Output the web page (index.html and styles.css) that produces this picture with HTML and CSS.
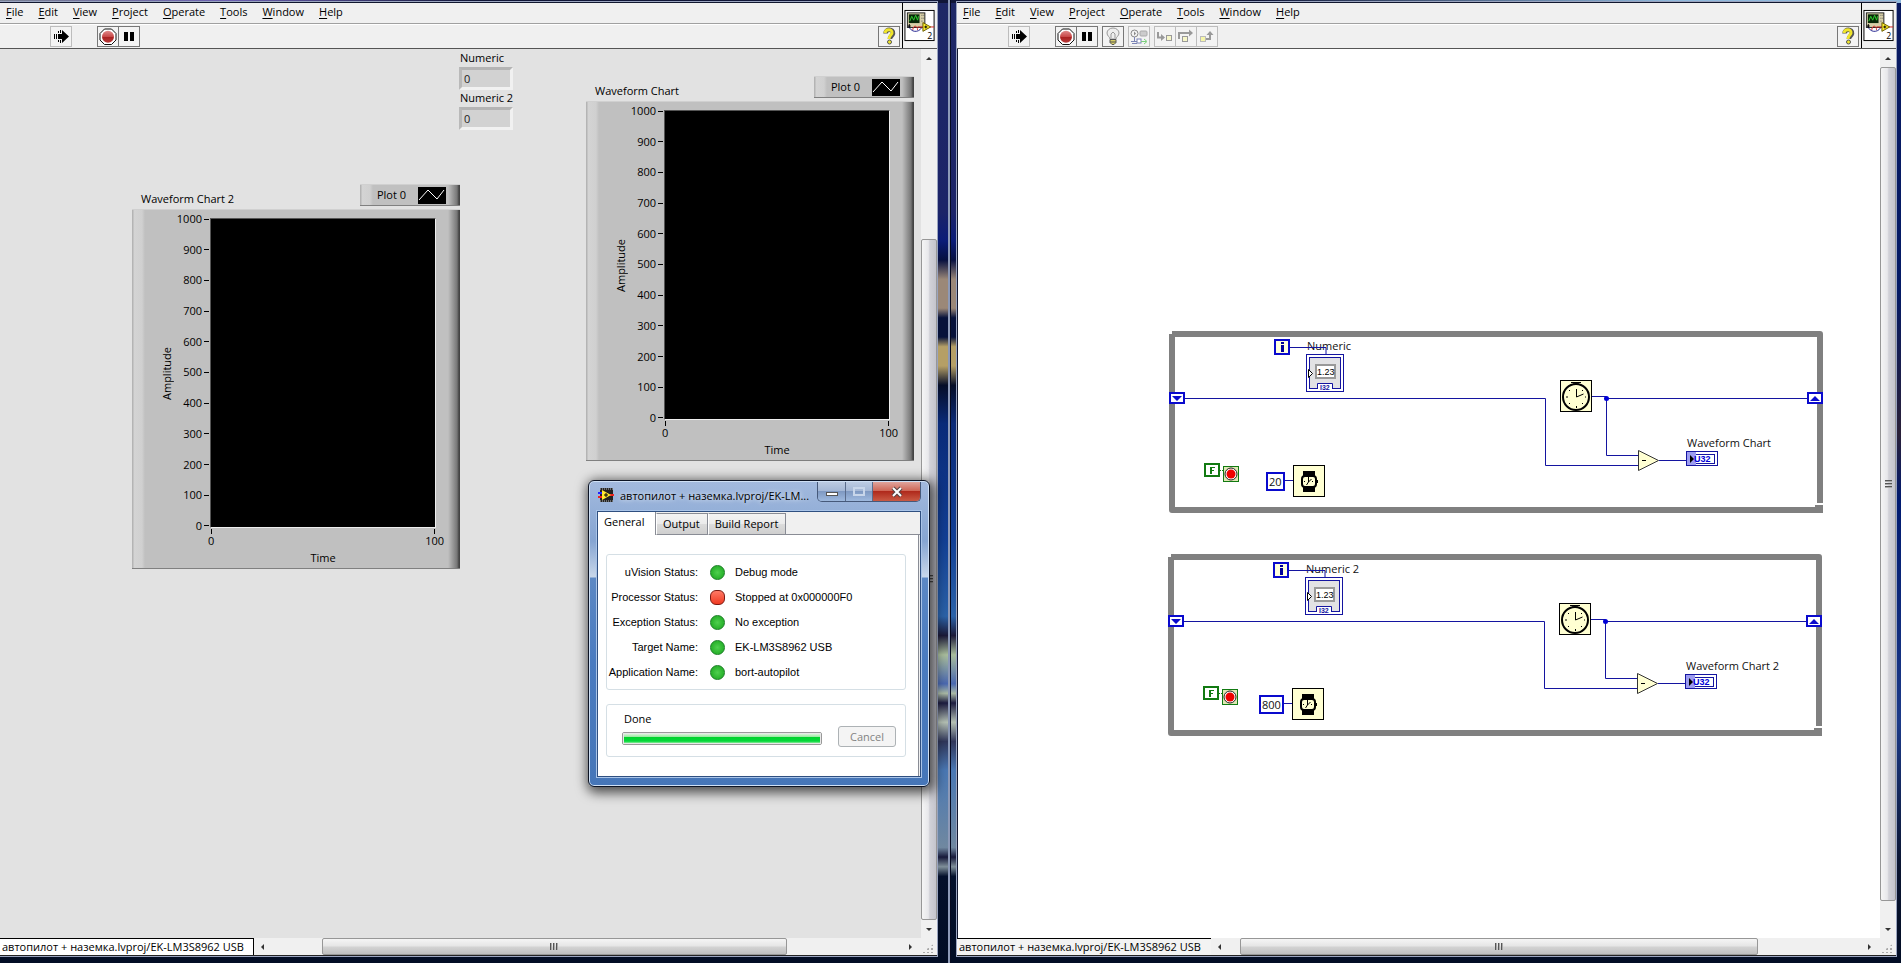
FILE: index.html
```html
<!DOCTYPE html>
<html lang="en">
<head>
<meta charset="utf-8">
<title>LabVIEW</title>
<link rel="stylesheet" href="styles.css">
</head>
<body>
<svg class="defs" aria-hidden="true">
  <defs>
    <linearGradient id="stopFill" x1="0" y1="0" x2="0" y2="1">
      <stop offset="0" stop-color="#e08a8a"/><stop offset=".5" stop-color="#c84848"/><stop offset=".52" stop-color="#a82020"/><stop offset="1" stop-color="#b83a3a"/>
    </linearGradient>
    <symbol id="run" viewBox="0 0 20 19">
      <path d="M8 7h3V3l7 6.500-7 6.500v-4H8z" fill="#000"/>
      <path d="M3.500 7v5M5.500 7v5M7.500 4v2M9.500 3v3M7.500 7v5M7.500 13v2M9.500 13v3" stroke="#000"/>
    </symbol>
    <symbol id="abort" viewBox="0 0 20 19">
      <path d="M6.500 2h7l4.500 4.500v6.500L13.500 17.500h-7L2 13V6.500z" fill="#fff" stroke="#111"/>
      <circle cx="10" cy="9.700" r="6" fill="url(#stopFill)"/>
    </symbol>
    <symbol id="pause" viewBox="0 0 20 19"><path d="M5 5h4v9H5zM11 5h4v9h-4z"/></symbol>
    <symbol id="bulb" viewBox="0 0 20 19">
      <path d="M7 12c0-2-3-3-3-6a6 5 0 0 1 12 0c0 3-3 4-3 6z" fill="#eee" stroke="#999"/>
      <path d="M8 11V7l2-2 2 2v4" fill="none" stroke="#999"/>
      <path d="M7 12.500h6v3l-2 2H9l-2-2z" fill="#d8cf66" stroke="#555"/>
      <path d="M7 15h6" stroke="#555"/>
    </symbol>
    <symbol id="retain" viewBox="0 0 20 19">
      <circle cx="5.500" cy="6.500" r="3.500" fill="none" stroke="#888"/><path d="M5 4.500l2 2-2 2z" fill="#888"/>
      <rect x="11" y="4" width="7" height="5" rx="1" fill="#ccc" stroke="#aaa"/>
      <path d="M5.500 10v4M2 14.500h6M3 16.500h5" stroke="#7b84b5"/>
      <rect x="8" y="12" width="4" height="4" fill="#fff" stroke="#7b84b5"/>
      <path d="M12 14.500h5M15 12l3 2.500-3 2.500" fill="none" stroke="#7ccf7c"/>
    </symbol>
    <symbol id="stepin" viewBox="0 0 20 19">
      <path d="M3 5v5.500h4" fill="none" stroke="#999" stroke-width="2"/><path d="M6 7l4 3.500-4 3.500z" fill="#999"/>
      <rect x="11.500" y="8.500" width="5" height="5" fill="#f6f6c8" stroke="#999"/>
    </symbol>
    <symbol id="stepover" viewBox="0 0 20 19">
      <path d="M3 12V6h11" fill="none" stroke="#999" stroke-width="2"/><path d="M13 2.500l4 3.500-4 3.500z" fill="#999"/>
      <rect x="6.500" y="9.500" width="5" height="5" fill="#f6f6c8" stroke="#999"/>
    </symbol>
    <symbol id="stepout" viewBox="0 0 20 19">
      <path d="M9 12h4V7" fill="none" stroke="#999" stroke-width="2"/><path d="M9.500 8L13 4l3.500 4z" fill="#999"/>
      <rect x="3.500" y="9.500" width="5" height="5" fill="#f6f6a8" stroke="#bbb"/>
    </symbol>
    <symbol id="help" viewBox="0 0 20 19">
      <path d="M6.500 6.500C6.500 1.500 14.500 1.500 14 6.500 13.500 9 11 9 11 12" fill="none" stroke="#555" stroke-width="4.500"/>
      <path d="M6 6C6.500 1.500 13.500 1.500 13 6 12.500 8.500 10 8.500 10 12" fill="none" stroke="#f0e52a" stroke-width="3"/>
      <circle cx="10.500" cy="15" r="2" fill="#f0e52a" stroke="#555"/>
    </symbol>
    <symbol id="vi" viewBox="0 0 35 45">
      <rect x="2" y="7" width="30" height="31" fill="#fff" stroke="#000"/>
      <rect x="4.500" y="9.500" width="18" height="15" fill="#d8d0a8" stroke="#222"/>
      <rect x="6" y="11" width="11" height="9" fill="#082808"/>
      <path d="M7 18l2-5 2 4 2-5 2 5 1-4" fill="none" stroke="#2fd02f"/>
      <path d="M19 12h1M21 12h1M19 15h1M21 15h1M19 18h1" stroke="#555"/>
      <path d="M6 23c2 7 10 7 13 2" fill="none" stroke="#23238f"/>
      <path d="M10 27c1-6 5-4 5 0M15 24h6M26 24h6" fill="none" stroke="#d42020"/>
      <path d="M5 23h3M6.500 21v4" stroke="#000"/>
      <path d="M20.500 19.500l8 4.500-8 4.500z" fill="#ffef2a" stroke="#6b5c00"/>
      <path d="M22 24h3M23.500 22.500v3" stroke="#000"/>
      <text x="25" y="36" class="vi-num">2</text>
    </symbol>
    <symbol id="structure" viewBox="0 0 654 182">
      <path d="M3 3H651V172" fill="none" stroke="#808080" stroke-width="6" stroke-linejoin="round"/>
      <path d="M3 3V179H651" fill="none" stroke="#808080" stroke-width="6" stroke-linejoin="round"/>
      <path d="M646 174h8v8h-8z" fill="#808080"/>
      <path d="M16 67.500H376.500V134.500H469M423 65.500h14v2H638M437.500 67V124.500H469M490 129.500h27M121 16.500h36v8" fill="none" stroke="#1414a0"/>
      <circle cx="437.500" cy="67.500" r="2.500" fill="#0000d8"/>
      <g fill="#fff" stroke="#0a0acd" stroke-width="2">
        <rect x="1" y="62" width="14" height="10"/><rect x="639" y="62" width="14" height="10"/>
        <rect x="106" y="9" width="14" height="14" fill="#ffffdc"/>
      </g>
      <path d="M3 65h10l-5 5zM641 70h10l-5-5z" fill="#0a0acd"/>
      <path d="M112 11h3v2h-3zM112 14h3v7h-3z" fill="#00009b"/>
      <rect x="137.500" y="23.500" width="37" height="37" fill="#fff" stroke="#1414a0"/>
      <rect x="140.500" y="26.500" width="31" height="31" fill="#e2e2e4" stroke="#1414a0"/>
      <rect x="147" y="34" width="19" height="13" fill="#fff" stroke="#999" stroke-width="2"/>
      <text x="148" y="44" class="glyph">1.23</text>
      <path d="M139.500 38.500l4 4-4 4z" fill="#fff" stroke="#000"/>
      <path d="M148.500 58v-5.500h15V58" fill="#fff" stroke="#1414a0"/>
      <text x="151" y="59" class="glyph-blue">I32</text>
      <rect x="391.500" y="49.500" width="31" height="31" fill="#ffffd2" stroke="#000"/>
      <circle cx="407" cy="66" r="13" fill="none" stroke="#000" stroke-width="2"/>
      <path d="M402 51.500h10M404 53h6M407.500 58v8l7-3M407.500 75v2M397 66h2M416 66h1M400 59l1 1M414 59l-1 1M400 73l1-1M414 73l-1-1" fill="none" stroke="#000"/>
      <path d="M469.500 119.500l20 10-20 10z" fill="#ffffd2" stroke="#333"/><path d="M473 129.500h4" stroke="#000"/>
      <rect x="517.500" y="120.500" width="31" height="14" fill="#fff" stroke="#1414a0"/>
      <rect x="520.500" y="123.500" width="25" height="9" fill="#fff" stroke="#1414a0"/>
      <path d="M518 121h9v13h-9z" fill="#9c9cf0"/><path d="M521 124l4 4-4 4z"/>
      <text x="525" y="131" class="glyph-u32">U32</text>
      <rect x="36" y="133" width="14" height="12" fill="#fff" stroke="#127a12" stroke-width="2"/>
      <path d="M41 136h5v1h-3v2h2v1h-2v3h-2z" fill="#127a12"/>
      <rect x="54.500" y="135.500" width="15" height="15" fill="#dfe9b4" stroke="#127a12"/>
      <circle cx="62" cy="143" r="6" fill="#fff" stroke="#222"/><circle cx="62" cy="143" r="4.500" fill="#f00000"/>
      <path d="M51 139.500h3" stroke="#127a12" stroke-dasharray="1 1"/>
      <rect x="124.500" y="134.500" width="31" height="31" fill="#ffffd2" stroke="#000"/>
      <path d="M134 140h12v6h-12zM134 156h12v5h-12z"/>
      <rect x="133" y="145" width="14" height="11" rx="3" fill="#ffffd2" stroke="#000" stroke-width="2"/>
      <path d="M139.500 146v5l3-3M139.500 151l-2 3M135 150.500h1M143 150.500h1" fill="none" stroke="#000"/>
      <path d="M148 149h1v3h-1z"/>
      <path d="M115 149.500h9" stroke="#1414a0"/>
    </symbol>
  </defs>
</svg>

<main class="desktop">
  <section class="window window-left" aria-label="Front panel">
    <div class="client">
      <header class="head">
        <div class="bars">
          <nav class="menu">
            <button><u>F</u>ile</button><button><u>E</u>dit</button><button><u>V</u>iew</button><button><u>P</u>roject</button><button><u>O</u>perate</button><button><u>T</u>ools</button><button><u>W</u>indow</button><button><u>H</u>elp</button>
          </nav>
          <div class="toolbar">
            <button class="tool dim run" aria-label="Run"><svg><use href="#run"/></svg></button>
            <div class="group"><button class="tool" aria-label="Abort"><svg><use href="#abort"/></svg></button><button class="tool" aria-label="Pause"><svg><use href="#pause"/></svg></button></div>
            <button class="tool help" aria-label="Context help"><svg><use href="#help"/></svg></button>
          </div>
        </div>
        <svg class="vi-icon"><use href="#vi"/></svg>
      </header>
      <div class="work">
        <div class="panel">
          <div class="numeric numeric-1"><label for="n1">Numeric</label><input id="n1" value="0" readonly></div>
          <div class="numeric numeric-2"><label for="n2">Numeric 2</label><input id="n2" value="0" readonly></div>

          <figure class="waveform waveform-1">
            <div class="top"><figcaption>Waveform Chart</figcaption>
              <div class="legend">Plot 0<svg viewBox="0 0 28 17"><path d="M1 13L10 3l9 9 7-9" fill="none" stroke="#fff"/></svg></div></div>
            <div class="chart">
              <span class="ylabel">Amplitude</span>
              <ul class="yticks"><li>1000</li><li>900</li><li>800</li><li>700</li><li>600</li><li>500</li><li>400</li><li>300</li><li>200</li><li>100</li><li>0</li></ul>
              <div class="plot"></div>
              <div class="xticks"><span>0</span><span>100</span></div>
              <span class="xlabel">Time</span>
            </div>
          </figure>

          <figure class="waveform waveform-2">
            <div class="top"><figcaption>Waveform Chart 2</figcaption>
              <div class="legend">Plot 0<svg viewBox="0 0 28 17"><path d="M1 13L10 3l9 9 7-9" fill="none" stroke="#fff"/></svg></div></div>
            <div class="chart">
              <span class="ylabel">Amplitude</span>
              <ul class="yticks"><li>1000</li><li>900</li><li>800</li><li>700</li><li>600</li><li>500</li><li>400</li><li>300</li><li>200</li><li>100</li><li>0</li></ul>
              <div class="plot"></div>
              <div class="xticks"><span>0</span><span>100</span></div>
              <span class="xlabel">Time</span>
            </div>
          </figure>
        </div>
        <div class="vscroll"><i class="arrow up"></i><div class="track"><i class="thumb"></i></div><i class="arrow down"></i></div>
      </div>
      <footer class="foot">
        <div class="path boxed">автопилот + наземка.lvproj/EK-LM3S8962 USB</div>
        <div class="hscroll"><i class="arrow left"></i><div class="track"><i class="thumb"></i></div><i class="arrow right"></i></div>
        <i class="grip"></i>
      </footer>
    </div>
  </section>

  <section class="window window-right" aria-label="Block diagram">
    <div class="client">
      <header class="head">
        <div class="bars">
          <nav class="menu">
            <button><u>F</u>ile</button><button><u>E</u>dit</button><button><u>V</u>iew</button><button><u>P</u>roject</button><button><u>O</u>perate</button><button><u>T</u>ools</button><button><u>W</u>indow</button><button><u>H</u>elp</button>
          </nav>
          <div class="toolbar">
            <button class="tool dim run" aria-label="Run"><svg><use href="#run"/></svg></button>
            <div class="group"><button class="tool" aria-label="Abort"><svg><use href="#abort"/></svg></button><button class="tool" aria-label="Pause"><svg><use href="#pause"/></svg></button></div>
            <button class="tool next" aria-label="Highlight execution"><svg><use href="#bulb"/></svg></button>
            <button class="tool dim next" aria-label="Retain wire values"><svg><use href="#retain"/></svg></button>
            <div class="group next"><button class="tool dim" aria-label="Step into"><svg><use href="#stepin"/></svg></button><button class="tool dim" aria-label="Step over"><svg><use href="#stepover"/></svg></button><button class="tool dim" aria-label="Step out"><svg><use href="#stepout"/></svg></button></div>
            <button class="tool help" aria-label="Context help"><svg><use href="#help"/></svg></button>
          </div>
        </div>
        <svg class="vi-icon"><use href="#vi"/></svg>
      </header>
      <div class="work">
        <div class="diagram">
          <svg class="loop loop-1" viewBox="0 0 654 182">
            <text x="138" y="19">Numeric</text><text x="518" y="116">Waveform Chart</text>
            <use href="#structure" width="654" height="182"/>
            <rect x="98" y="142" width="17" height="17" fill="#fff" stroke="#0a0acd" stroke-width="2"/><text x="100" y="155">20</text>
          </svg>
          <svg class="loop loop-2" viewBox="0 0 654 182">
            <text x="138" y="19">Numeric 2</text><text x="518" y="116">Waveform Chart 2</text>
            <use href="#structure" width="654" height="182"/>
            <rect x="92" y="142" width="23" height="17" fill="#fff" stroke="#0a0acd" stroke-width="2"/><text x="94" y="155">800</text>
          </svg>
        </div>
        <div class="vscroll"><i class="arrow up"></i><div class="track"><i class="thumb"></i></div><i class="arrow down"></i></div>
      </div>
      <footer class="foot">
        <div class="path">автопилот + наземка.lvproj/EK-LM3S8962 USB</div>
        <div class="hscroll"><i class="arrow left"></i><div class="track"><i class="thumb"></i></div><i class="arrow right"></i></div>
        <i class="grip"></i>
      </footer>
    </div>
  </section>

  <section class="dialog" role="dialog" aria-labelledby="dlg">
    <header class="titlebar">
      <svg class="app" viewBox="0 0 16 14"><path d="M2 0h13v14H2z" fill="#222"/><path d="M2 1h13M2 13h13" stroke="#bbb" stroke-dasharray="1 1"/><path d="M0 5h4" stroke="#22f" stroke-width="2"/><path d="M0 9h4M12 7h4" stroke="#e22" stroke-width="2"/><path d="M4 2l9 5-9 5z" fill="#ffe92e"/><path d="M6 7h4M8 5v4" stroke="#000"/></svg>
      <h1 id="dlg">автопилот + наземка.lvproj/EK-LM...</h1>
      <div class="caption">
        <button aria-label="Minimize"><svg viewBox="0 0 14 12"><rect x="1.500" y="6.500" width="11" height="3" fill="#fff" stroke="#555"/></svg></button>
        <button class="max" aria-label="Maximize" disabled><svg viewBox="0 0 14 12"><rect x="2" y="2" width="10" height="7" fill="none" stroke="#c8d6ea" stroke-width="2"/></svg></button>
        <button class="close" aria-label="Close"><svg viewBox="0 0 14 12"><path d="M3 2l8 8M11 2l-8 8" stroke="#544" stroke-width="4"/><path d="M3 2l8 8M11 2l-8 8" stroke="#fff" stroke-width="2"/></svg></button>
      </div>
    </header>
    <div class="body">
      <div class="tabs" role="tablist"><button role="tab" class="active">General</button><button role="tab">Output</button><button role="tab">Build Report</button></div>
      <div class="page">
        <dl class="status box">
          <dt>uVision Status:</dt><dd>Debug mode</dd>
          <dt>Processor Status:</dt><dd class="bad">Stopped at 0x000000F0</dd>
          <dt>Exception Status:</dt><dd>No exception</dd>
          <dt>Target Name:</dt><dd>EK-LM3S8962 USB</dd>
          <dt>Application Name:</dt><dd>bort-autopilot</dd>
        </dl>
        <div class="deploy box">
          <div class="job"><label for="pg">Done</label><progress id="pg" max="100" value="100"></progress></div>
          <button class="cancel" disabled>Cancel</button>
        </div>
      </div>
    </div>
  </section>
</main>
</body>
</html>
```

FILE: styles.css
```css
*, *::before, *::after { box-sizing: border-box; }
body { margin: 0; font: 11px/14px "Open Sans", "Noto Sans", sans-serif; color: #000; }
button { font: inherit; color: inherit; border: 0; background: none; padding: 0; margin: 0; }
.defs { position: absolute; width: 0; height: 0; }

/* desktop */
.desktop {
  position: relative;
  height: 100vh;
  min-height: 800px;
  overflow: hidden;
  display: grid;
  grid-template-columns: 949fr 952fr;
  background:
    linear-gradient(90deg, #777f92, #6a5fb0 12%, #101638 25%, #101638 66%, #8fb8dc 88%, #8fb8dc) top / 100% 3px no-repeat,
    linear-gradient(#020d25, #020d25) bottom / 100% 8px no-repeat,
    linear-gradient(#0a1a60, #041a66 30%, #2a2038 45%, #001a70 52%, #1c3a88 75%, #0a1430 90%, #020d25) right / 6px 100% no-repeat,
    linear-gradient(#1e2866 0%, #1c2468 22%, #0b1c78 25%, #071040 27%, #9b8878 29%, #9b8878 32%, #07123a 33%, #07123a 35%, #b59f66 36%, #b59f66 38%, #050d28 40%, #0a2a78 44%, #123f95 56%, #2b62a8 64%, #1c1a38 66%, #a9bd9c 68%, #4a68b0 71%, #a9b9a5 72%, #1c1c40 73%, #b4c0b4 75%, #30365a 77%, #4a78b4 80%, #7088a0 88%, #16193a 89%, #7f8f99 90%, #04102b 91%, #020d25 100%);
}
.window { display: flex; padding: 1px 0 6px; border: 0 solid #8d9ab8; min-width: 0; }
.window-left { padding-right: 10px; border-right-width: 1px; box-shadow: 2px 0 #060a20; }
.window-right { padding-left: 6px; padding-right: 4px; border-left-width: 1px; }
.client { flex: 1; min-width: 0; display: flex; flex-direction: column; border: 1px solid #9aa4bf; box-shadow: inset 0 0 0 1px #10162e; }
.window-left .client { border-left: 0; }

/* menu and toolbar */
.head { display: flex; background: #f0f0f0; margin-top: 1px; border-bottom: 1px solid #555; }
.bars { flex: 1; }
.menu { display: flex; gap: 15px; height: 21px; padding: 0 6px 2px; border-bottom: 1px solid #a0a0a0; align-items: center; }
.menu u { text-underline-offset: 2px; }
.toolbar { display: flex; align-items: center; height: 24px; padding-right: 2px; background: #f0f0f0; border-top: 1px solid #fff; }
.tool { display: block; width: 22px; height: 21px; border: 1px solid #777; background: #f3f3f3; }
.tool svg { display: block; width: 20px; height: 19px; }
.tool.dim { border-color: #bdbdbd; }
.group { display: flex; }
.group .tool + .tool { margin-left: -1px; }
.run { margin-left: 50px; margin-right: 25px; }
.window-right .run { margin-left: 51px; }
.next { margin-left: 4px; }
.help { margin-left: auto; }
.vi-icon { width: 35px; height: 45px; border-left: 1px solid #000; }
.vi-num { font: 9px "Open Sans", sans-serif; }

/* work areas */
.work { flex: 1; display: flex; min-height: 0; }
.panel, .diagram { flex: 1; position: relative; overflow: hidden; background: #e2e2e2; }
.diagram { background: #fff; margin-left: 1px; }

/* scroll bars */
.vscroll, .hscroll { display: flex; background: #f0f0f0; }
.vscroll { width: 16px; flex-direction: column; }
.hscroll { flex: 1; }
.track { flex: 1; display: flex; }
.vscroll .track { flex-direction: column; }
.track::before, .track::after { content: ""; }
.thumb { display: flex; align-items: center; justify-content: center; border: 1px solid #979797; border-radius: 2px; }
.vscroll .thumb { background: linear-gradient(90deg, #f5f5f5, #e8e8eb 45%, #d2d2d8 55%, #c4c4cc); }
.hscroll .thumb { background: linear-gradient(#f5f5f5, #e6e6e6 45%, #d2d2d2 55%, #bfbfbf); }
.thumb::before { content: ""; }
.hscroll .thumb::before { width: 8px; height: 7px; background: repeating-linear-gradient(90deg, #555 0 1px, #aaa 1px 2px, transparent 2px 3px); }
.vscroll .thumb::before { width: 7px; height: 8px; background: repeating-linear-gradient(#555 0 1px, #aaa 1px 2px, transparent 2px 3px); }
.window-left .vscroll .track::before { flex: 172; }
.window-left .vscroll .thumb { flex: 681; }
.window-right .vscroll .thumb { flex: 834; }
.window-right .vscroll .track::after { flex: 19; }
.window-left .hscroll .track::before { flex: 52; }
.window-left .hscroll .thumb { flex: 466; }
.window-left .hscroll .track::after { flex: 116; }
.window-right .hscroll .track::before { flex: 13; }
.window-right .hscroll .thumb { flex: 519; }
.window-right .hscroll .track::after { flex: 104; }
.arrow { width: 16px; height: 18px; display: flex; align-items: center; justify-content: center; }
.arrow::before { content: ""; width: 0; height: 0; border: 3px solid transparent; }
.up::before { border-bottom-color: #333; border-top: 0; }
.down::before { border-top-color: #333; border-bottom: 0; }
.left::before { border-right-color: #333; border-left: 0; }
.right::before { border-left-color: #333; border-right: 0; }
.foot { display: flex; height: 18px; background: #f0f0f0; border-bottom: 1px solid #222; }
.path { width: 254px; padding: 0 1px 0 2px; line-height: 15px; border-top: 1px solid #000; white-space: nowrap; background: #f3f3f3; overflow: hidden; }
.boxed { border-right: 1px solid #000; background: #fff; }
.grip { width: 17px; margin: 5px 2px 2px 0; background: radial-gradient(#aaa 1px, transparent 1px) 0 0 / 4px 4px; clip-path: polygon(100% 0, 100% 100%, 20% 100%); }

/* front panel objects */
.numeric { position: absolute; left: 459px; width: 54px; }
.numeric-1 { top: 2px; }
.numeric-2 { top: 42px; }
.numeric label { display: block; padding-left: 1px; margin-bottom: 2px; white-space: nowrap; }
.numeric input { display: block; width: 54px; height: 23px; padding: 0 2px; font: inherit; color: #222; background: #d2d2d2; border: 3px solid; border-color: #b4b4b4 #f1f1f1 #f1f1f1 #b9b9b9; outline: 0; }
.waveform { position: absolute; width: 328px; margin: 0; }
.waveform-1 { left: 586px; top: 27px; }
.waveform-2 { left: 132px; top: 135px; }
.top { display: flex; justify-content: space-between; align-items: flex-start; height: 25px; padding-left: 9px; }
figcaption { padding-top: 8px; }
.legend { display: flex; align-items: center; justify-content: flex-end; gap: 12px; width: 100px; height: 22px; padding-right: 14px; }
.legend svg { width: 28px; height: 17px; background: #000; }
.legend, .chart {
  background: linear-gradient(90deg, #b4b4b4 1px, #d4d4d4 2px, #d0d0d0 10px, transparent 13px), linear-gradient(270deg, #444 1px, #777 3px, #a8a8a8 9px, transparent 12px), #c0c0c0;
  border-top: 1px solid #d0d0d0;
  border-bottom: 1px solid #808080;
}
.chart { display: grid; grid-template-columns: 42px 36px 1fr; grid-template-rows: 310px 20px 1fr; height: 360px; padding: 8px 24px 0 0; }
.ylabel { writing-mode: vertical-rl; transform: rotate(180deg); place-self: center end; }
.yticks { list-style: none; margin: -6px 0 -5px; padding: 0; display: flex; flex-direction: column; justify-content: space-between; text-align: right; }
.yticks li { display: flex; justify-content: flex-end; align-items: center; gap: 2px; margin-left: -8px; }
.yticks li::after { content: ""; width: 5px; height: 1px; margin-right: 1px; background: #000; }
.plot { background: #000; border: 1px solid #555; border-right-color: #eee; border-bottom-color: #eee; }
.xticks { grid-column: 3; display: flex; justify-content: space-between; margin: 1px -8px 0 -2px; }
.xticks span { display: flex; flex-direction: column; align-items: center; }
.xticks span::before { content: ""; width: 1px; height: 5px; background: #000; }
.xlabel { grid-column: 3; text-align: center; padding-top: 3px; }

/* block diagram loops */
.loop { position: absolute; width: 654px; height: 182px; }
.loop-1 { left: 211px; top: 282px; }
.loop-2 { left: 210px; top: 505px; }
.loop text { font: 11px "Open Sans", "Noto Sans", sans-serif; fill: #111; }
.loop .glyph, .glyph { font: 9px "Liberation Sans", sans-serif; }
.glyph-blue { font: bold 7px "Liberation Sans", sans-serif; fill: #1414a0; }
.glyph-u32 { font: bold 9px "Liberation Sans", sans-serif; fill: #0000d8; }

/* deployment dialog */
.dialog {
  position: absolute; left: 588px; top: 480px; width: 342px;
  padding: 1px 8px 9px;
  border: 1px solid #0d1424;
  border-radius: 6px;
  background: linear-gradient(#a3bade 0, #86a5d2 60px, #c8d7ea 96px, #5c88c4 97px, #4a7bc0 180px, #4676b8 100%);
  box-shadow: inset 0 0 0 1px #cfe0f5, 2px 3px 12px 3px rgba(0, 0, 0, .65);
}
.titlebar { display: flex; height: 29px; }
.app { width: 16px; height: 14px; margin: 6px 6px 0 1px; flex: none; }
h1 { flex: 1; margin: 6px 0 0; font: 11px/16px "Open Sans", sans-serif; white-space: nowrap; text-shadow: 0 0 5px #fff; }
.caption { display: flex; height: 20px; border: 1px solid #46597a; border-top: 0; border-radius: 0 0 5px 5px; overflow: hidden; flex: none; }
.caption button { width: 28px; display: flex; align-items: center; justify-content: center; background: linear-gradient(#bccbe2, #a5b8d6 45%, #7f99c2 50%, #9eb9de); border-right: 1px solid #5a6c8c; }
.caption svg { width: 14px; height: 12px; }
.caption .max { width: 27px; }
.caption .close { width: 47px; border: 0; background: linear-gradient(#e0a49c, #cf6858 45%, #b02a1c 50%, #c95a44); }
.body { border: 1px solid #2f4f80; outline: 1px solid #a9c4e8; background: #f0f0f0; }
.tabs { display: flex; height: 23px; padding-right: 2px; align-items: flex-end; background: linear-gradient(#898c95, #898c95) bottom / 100% 1px no-repeat; }
.tabs button { height: 22px; padding: 0 7px 1px 6px; background: linear-gradient(#f3f3f3, #ebebeb 49%, #dcdcdc 50%, #cfcfcf); border: 1px solid #898c95; border-left-color: #fff; }
.tabs .active { width: 58px; height: 23px; padding: 0 16px 3px 6px; background: #fff; border: 0; border-right: 1px solid #898c95; }
.page { background: #fff; padding: 19px 12px 19px 8px; border-right: 1px solid #898c95; margin-right: 1px; display: grid; gap: 14px; }
.box { border: 1px solid #d5dfe5; border-radius: 3px; margin: 0; }
.status { display: grid; grid-template-columns: 91px 1fr; grid-auto-rows: 14px; gap: 11px 12px; padding: 10px 0; font-family: "Liberation Sans", sans-serif; }
.status dt { display: flex; justify-content: flex-end; white-space: nowrap; }
.status dd { margin: 0; display: flex; align-items: center; gap: 10px; white-space: nowrap; }
.status dd::before { content: ""; width: 15px; height: 15px; border-radius: 50%; border: 1px solid #157a1f; background: radial-gradient(#4fd04f, #2db52f 60%, #2fc03a); }
.status .bad::before { border-color: #7c1a12; border-radius: 6px; background: linear-gradient(#ff7a66, #f03a22); }
.deploy { display: flex; justify-content: space-between; align-items: flex-start; padding: 7px 9px 9px 15px; }
.job { width: 200px; }
.job label { display: block; padding-left: 2px; margin-bottom: 6px; }
progress { display: block; appearance: none; width: 100%; height: 13px; border: 1px solid #999; border-radius: 2px; overflow: hidden; }
progress::-webkit-progress-bar { background: #e8e8e8; padding: 1px; }
progress::-webkit-progress-value { background: linear-gradient(#d8f5d8 0, #9de8a4 30%, #00d32b 35%, #04d83a 80%, #8cec9c); }
.cancel { width: 58px; height: 21px; margin-top: 14px; border: 1px solid #adb2b5; border-radius: 3px; background: #f4f4f4; color: #838383; }
```
